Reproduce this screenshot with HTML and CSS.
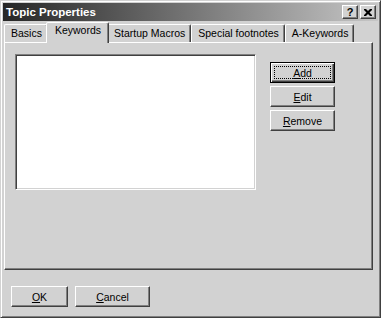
FILE: index.html
```html
<!DOCTYPE html>
<html lang="en">
<head>
<meta charset="UTF-8" />
<title>Topic Properties</title>
<link rel="stylesheet" href="styles.css">
</head>
<body>
<div class="dialog">
  <div class="titlebar">
    <span class="title">Topic Properties</span>
    <div class="caption-btns">
      <div class="cap">?</div>
      <div class="cap close">
        <svg width="8" height="7" viewBox="0 0 8 7"><path d="M0 0h2l2 2 2-2h2v1l-2.5 2.5L8 6v1H6L4 5 2 7H0V6l2.5-2.5L0 1z" fill="#000"/></svg>
      </div>
    </div>
  </div>
  <div class="body">
    <div class="tabs">
      <div class="tab">Basics</div>
      <div class="tab active">Keywords</div>
      <div class="tab">Startup Macros</div>
      <div class="tab">Special footnotes</div>
      <div class="tab">A-Keywords</div>
    </div>
    <div class="panel">
      <div class="listbox"></div>
      <div class="side-btns">
        <div class="btn default"><span class="focus"><u>A</u>dd</span></div>
        <div class="btn"><u>E</u>dit</div>
        <div class="btn"><u>R</u>emove</div>
      </div>
    </div>
    <div class="footer">
      <div class="btn ok"><u>O</u>K</div>
      <div class="btn cancel"><u>C</u>ancel</div>
    </div>
  </div>
</div>
</body>
</html>
```

FILE: styles.css
```css
* {
box-sizing: border-box;
}
body {
margin: 0;
background: #fff;
font-family: "Liberation Sans", Arial, sans-serif;
font-size: 10.5px;
color: #000;
}
.dialog {
width: 381px;
height: 318px;
background: #d2d2d2;
border: 1px solid;
border-color: #d2d2d2 #404040 #404040 #d2d2d2;
box-shadow: inset 1px 1px #fff, inset -1px -1px #808080;
padding: 2px;
display: flex;
flex-direction: column;
}
.titlebar {
height: 18px;
background: linear-gradient(to right, #262626, #c6c6c6);
display: flex;
align-items: center;
justify-content: space-between;
padding: 0 2px 0 3px;
}
.title {
color: #fff;
font-weight: bold;
font-size: 11.5px;
}
.caption-btns {
display: flex;
gap: 2px;
}
.cap {
width: 16px;
height: 14px;
background: #d2d2d2;
border: 1px solid;
border-color: #fff #404040 #404040 #fff;
box-shadow: inset -1px -1px #808080;
display: flex;
align-items: center;
justify-content: center;
font-weight: bold;
font-size: 11px;
line-height: 1;
}
.body {
flex: 1;
padding: 1px 0 0 1px;
}
.tabs {
display: flex;
align-items: flex-end;
height: 20px;
}
.tab {
height: 18px;
padding: 2px 5px 0 6px;
border: 1px solid;
border-bottom: 0;
border-color: #fff #404040 transparent #fff;
box-shadow: inset -1px 0 #808080;
border-radius: 2px 2px 0 0;
line-height: 13px;
white-space: nowrap;
}
.tab.active {
height: 21px;
margin: 0 -2px -1px;
position: relative;
z-index: 1;
background: #d2d2d2;
padding: 1px 7px 0 8px;
}
.panel {
width: 369px;
height: 228px;
border: 1px solid;
border-color: #fff #404040 #404040 #fff;
box-shadow: inset -1px -1px #808080;
display: flex;
align-items: flex-start;
gap: 14px;
padding: 11px 0 0 10px;
}
.listbox {
width: 241px;
height: 136px;
background: #fff;
border: 1px solid;
border-color: #808080 #fff #fff #808080;
box-shadow: inset 1px 1px #404040, inset -1px -1px #d2d2d2;
}
.side-btns {
display: flex;
flex-direction: column;
gap: 3px;
margin-top: 8px;
}
.btn {
width: 65px;
height: 21px;
background: #d2d2d2;
border: 1px solid;
border-color: #fff #404040 #404040 #fff;
box-shadow: inset -1px -1px #808080;
display: flex;
align-items: center;
justify-content: center;
}
.btn.default {
border-color: #000;
box-shadow: inset 1px 1px #fff, inset -1px -1px #404040, inset -2px -2px #808080;
}
.focus {
flex: 1;
align-self: stretch;
margin: 3px;
border: 1px dotted #000;
display: flex;
align-items: center;
justify-content: center;
}
.footer {
display: flex;
gap: 7px;
padding: 16px 0 0 7px;
}
.btn.ok {
width: 57px;
}
.btn.cancel {
width: 75px;
}
```
